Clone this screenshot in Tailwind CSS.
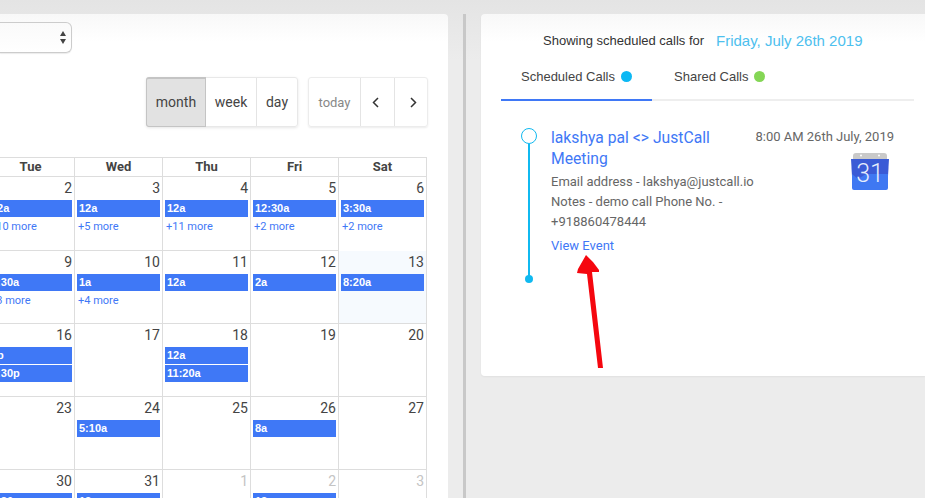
<!DOCTYPE html>
<html lang="en">
    <head>
        <title>Scheduled Calls</title>
        <meta charset="utf-8">
        <script src="https://cdn.jsdelivr.net/npm/@tailwindcss/browser@4"></script>
    </head>
    <body class="relative w-[925px] h-[498px] overflow-hidden bg-[linear-gradient(#e4e4e4,#ececec_60px)] font-['Roboto',sans-serif] text-[#444]">
        <div class="flex items-start pt-[14px]">

            <!-- calendar card -->
            <div class="w-[448px] h-[484px] shrink-0 overflow-hidden rounded-tr-[4px] bg-[linear-gradient(#f8f8f8,#fff_28px)]">
                <div class="h-[8px]"></div>
                <div class="w-[72px] h-[31px] flex items-center justify-end pr-[5px] bg-[linear-gradient(#fafafa,#fff)] border border-l-0 border-[#ccc] rounded-r-[6px] shadow-[0_1px_1px_rgba(0,0,0,0.08)]">
                    <svg width="6" height="13" viewBox="0 0 6 13" class="fill-[#444]"><path d="M3 0 6 5H0Z"/><path d="M0 8H6L3 13Z"/></svg>
                </div>

                <div class="flex justify-end gap-[10px] mt-[24px] pr-[20px] text-[14px] leading-[49px]">
                    <div class="flex h-[50px] rounded-[3px] border border-[#e8e8e8] shadow-[0_1px_3px_rgba(0,0,0,0.1)]">
                        <div class="w-[60px] text-center bg-[#e2e2e2] border-[#c4c4c4] border border-t-[2px] -m-px mr-0 rounded-l-[3px] leading-[47px]">month</div>
                        <div class="w-[51px] text-center border-r border-[#e4e4e4]">week</div>
                        <div class="w-[40px] text-center">day</div>
                    </div>
                    <div class="flex h-[50px] rounded-[3px] border border-[#ececec] shadow-[0_1px_2px_rgba(0,0,0,0.08)]">
                        <div class="w-[52px] text-center text-[13px] text-[#888] border-r border-[#e4e4e4]">today</div>
                        <div class="w-[34px] flex items-center justify-center pr-[5px] border-r border-[#e4e4e4]">
                            <svg width="7" height="11" viewBox="0 0 7 11" fill="none" class="stroke-[#333] stroke-[1.5]"><path d="M6 1 1.5 5.5 6 10"/></svg>
                        </div>
                        <div class="w-[32px] flex items-center justify-center pl-[4px]">
                            <svg width="7" height="11" viewBox="0 0 7 11" fill="none" class="stroke-[#333] stroke-[1.5]"><path d="M1 1 5.5 5.5 1 10"/></svg>
                        </div>
                    </div>
                </div>

                <!-- month grid -->
                <div class="grid grid-cols-[repeat(5,88px)] grid-rows-[19px_74px_73px_73px_73px_73px] w-[440px] -ml-[13px] mt-[30px] border-t border-[#ddd] text-[14px] leading-[20px]">
                    <div class="border-r border-b border-[#ddd] text-center text-[13px] font-bold leading-[18px]">Tue</div>
                    <div class="border-r border-b border-[#ddd] text-center text-[13px] font-bold leading-[18px]">Wed</div>
                    <div class="border-r border-b border-[#ddd] text-center text-[13px] font-bold leading-[18px]">Thu</div>
                    <div class="border-r border-b border-[#ddd] text-center text-[13px] font-bold leading-[18px]">Fri</div>
                    <div class="border-r border-b border-[#ddd] text-center text-[13px] font-bold leading-[18px]">Sat</div>

                    <div class="border-r border-b border-[#ddd]">
                        <div class="h-[23px] pt-px pr-[2px] text-right">2</div>
                        <div class="h-[17px] mx-[2px] pl-[2px] bg-[#3f78f6] text-white text-[11px] font-bold font-['Liberation_Sans',sans-serif] leading-[17px]">12a</div>
                        <div class="h-[20px] pl-[3px] text-[#3f78f6] text-[11px] leading-[20px]">+10 more</div>
                    </div>
                    <div class="border-r border-b border-[#ddd]">
                        <div class="h-[23px] pt-px pr-[2px] text-right">3</div>
                        <div class="h-[17px] mx-[2px] pl-[2px] bg-[#3f78f6] text-white text-[11px] font-bold font-['Liberation_Sans',sans-serif] leading-[17px]">12a</div>
                        <div class="h-[20px] pl-[3px] text-[#3f78f6] text-[11px] leading-[20px]">+5 more</div>
                    </div>
                    <div class="border-r border-b border-[#ddd]">
                        <div class="h-[23px] pt-px pr-[2px] text-right">4</div>
                        <div class="h-[17px] mx-[2px] pl-[2px] bg-[#3f78f6] text-white text-[11px] font-bold font-['Liberation_Sans',sans-serif] leading-[17px]">12a</div>
                        <div class="h-[20px] pl-[3px] text-[#3f78f6] text-[11px] leading-[20px]">+11 more</div>
                    </div>
                    <div class="border-r border-b border-[#ddd]">
                        <div class="h-[23px] pt-px pr-[2px] text-right">5</div>
                        <div class="h-[17px] mx-[2px] pl-[2px] bg-[#3f78f6] text-white text-[11px] font-bold font-['Liberation_Sans',sans-serif] leading-[17px]">12:30a</div>
                        <div class="h-[20px] pl-[3px] text-[#3f78f6] text-[11px] leading-[20px]">+2 more</div>
                    </div>
                    <div class="border-r border-[#ddd]">
                        <div class="h-[23px] pt-px pr-[2px] text-right">6</div>
                        <div class="h-[17px] mx-[2px] pl-[2px] bg-[#3f78f6] text-white text-[11px] font-bold font-['Liberation_Sans',sans-serif] leading-[17px]">3:30a</div>
                        <div class="h-[20px] pl-[3px] text-[#3f78f6] text-[11px] leading-[20px]">+2 more</div>
                    </div>

                    <div class="border-r border-b border-[#ddd]">
                        <div class="h-[23px] pt-px pr-[2px] text-right">9</div>
                        <div class="h-[17px] mx-[2px] pl-[2px] bg-[#3f78f6] text-white text-[11px] font-bold font-['Liberation_Sans',sans-serif] leading-[17px]">2:30a</div>
                        <div class="h-[20px] pl-[3px] text-[#3f78f6] text-[11px] leading-[20px]">+3 more</div>
                    </div>
                    <div class="border-r border-b border-[#ddd]">
                        <div class="h-[23px] pt-px pr-[2px] text-right">10</div>
                        <div class="h-[17px] mx-[2px] pl-[2px] bg-[#3f78f6] text-white text-[11px] font-bold font-['Liberation_Sans',sans-serif] leading-[17px]">1a</div>
                        <div class="h-[20px] pl-[3px] text-[#3f78f6] text-[11px] leading-[20px]">+4 more</div>
                    </div>
                    <div class="border-r border-b border-[#ddd]">
                        <div class="h-[23px] pt-px pr-[2px] text-right">11</div>
                        <div class="h-[17px] mx-[2px] pl-[2px] bg-[#3f78f6] text-white text-[11px] font-bold font-['Liberation_Sans',sans-serif] leading-[17px]">12a</div>
                    </div>
                    <div class="border-r border-b border-[#ddd]">
                        <div class="h-[23px] pt-px pr-[2px] text-right">12</div>
                        <div class="h-[17px] mx-[2px] pl-[2px] bg-[#3f78f6] text-white text-[11px] font-bold font-['Liberation_Sans',sans-serif] leading-[17px]">2a</div>
                    </div>
                    <div class="border-r border-b border-[#ddd] bg-[#f6fafe]">
                        <div class="h-[23px] pt-px pr-[2px] text-right">13</div>
                        <div class="h-[17px] mx-[2px] pl-[2px] bg-[#3f78f6] text-white text-[11px] font-bold font-['Liberation_Sans',sans-serif] leading-[17px]">8:20a</div>
                    </div>

                    <div class="border-r border-b border-[#ddd]">
                        <div class="h-[23px] pt-px pr-[2px] text-right">16</div>
                        <div class="h-[17px] mx-[2px] mb-px pl-[2px] bg-[#3f78f6] text-white text-[11px] font-bold font-['Liberation_Sans',sans-serif] leading-[17px]">1p</div>
                        <div class="h-[17px] mx-[2px] pl-[2px] bg-[#3f78f6] text-white text-[11px] font-bold font-['Liberation_Sans',sans-serif] leading-[17px]">2:30p</div>
                    </div>
                    <div class="border-r border-b border-[#ddd]">
                        <div class="h-[23px] pt-px pr-[2px] text-right">17</div>
                    </div>
                    <div class="border-r border-b border-[#ddd]">
                        <div class="h-[23px] pt-px pr-[2px] text-right">18</div>
                        <div class="h-[17px] mx-[2px] mb-px pl-[2px] bg-[#3f78f6] text-white text-[11px] font-bold font-['Liberation_Sans',sans-serif] leading-[17px]">12a</div>
                        <div class="h-[17px] mx-[2px] pl-[2px] bg-[#3f78f6] text-white text-[11px] font-bold font-['Liberation_Sans',sans-serif] leading-[17px]">11:20a</div>
                    </div>
                    <div class="border-r border-b border-[#ddd]">
                        <div class="h-[23px] pt-px pr-[2px] text-right">19</div>
                    </div>
                    <div class="border-r border-b border-[#ddd]">
                        <div class="h-[23px] pt-px pr-[2px] text-right">20</div>
                    </div>

                    <div class="border-r border-b border-[#ddd]">
                        <div class="h-[23px] pt-px pr-[2px] text-right">23</div>
                    </div>
                    <div class="border-r border-b border-[#ddd]">
                        <div class="h-[23px] pt-px pr-[2px] text-right">24</div>
                        <div class="h-[17px] mx-[2px] pl-[2px] bg-[#3f78f6] text-white text-[11px] font-bold font-['Liberation_Sans',sans-serif] leading-[17px]">5:10a</div>
                    </div>
                    <div class="border-r border-b border-[#ddd]">
                        <div class="h-[23px] pt-px pr-[2px] text-right">25</div>
                    </div>
                    <div class="border-r border-b border-[#ddd]">
                        <div class="h-[23px] pt-px pr-[2px] text-right">26</div>
                        <div class="h-[17px] mx-[2px] pl-[2px] bg-[#3f78f6] text-white text-[11px] font-bold font-['Liberation_Sans',sans-serif] leading-[17px]">8a</div>
                    </div>
                    <div class="border-r border-b border-[#ddd]">
                        <div class="h-[23px] pt-px pr-[2px] text-right">27</div>
                    </div>

                    <div class="border-r border-[#ddd]">
                        <div class="h-[23px] pt-px pr-[2px] text-right">30</div>
                        <div class="h-[17px] mx-[2px] pl-[2px] bg-[#3f78f6] text-white text-[11px] font-bold font-['Liberation_Sans',sans-serif] leading-[17px]">1:30a</div>
                    </div>
                    <div class="border-r border-[#ddd]">
                        <div class="h-[23px] pt-px pr-[2px] text-right">31</div>
                        <div class="h-[17px] mx-[2px] pl-[2px] bg-[#3f78f6] text-white text-[11px] font-bold font-['Liberation_Sans',sans-serif] leading-[17px]">12a</div>
                    </div>
                    <div class="border-r border-[#ddd]">
                        <div class="h-[23px] pt-px pr-[2px] text-right text-[#c4c4c4]">1</div>
                    </div>
                    <div class="border-r border-[#ddd]">
                        <div class="h-[23px] pt-px pr-[2px] text-right text-[#c4c4c4]">2</div>
                        <div class="h-[17px] mx-[2px] pl-[2px] bg-[#3f78f6] text-white text-[11px] font-bold font-['Liberation_Sans',sans-serif] leading-[17px]">12a</div>
                    </div>
                    <div class="border-r border-[#ddd]">
                        <div class="h-[23px] pt-px pr-[2px] text-right text-[#c4c4c4]">3</div>
                    </div>
                </div>
            </div>

            <!-- divider -->
            <div class="w-[3px] h-[484px] ml-[15px] mr-[15px] shrink-0 bg-[#c8c8c8]"></div>

            <!-- scheduled calls card -->
            <div class="w-[444px] h-[362px] shrink-0 rounded-l-[4px] bg-[linear-gradient(#f8f8f8,#fff_28px)] shadow-[0_1px_2px_rgba(0,0,0,0.05)]">
                <div class="flex items-center h-[26px] mt-[14px] pl-[62px] text-[#333]">
                    <span class="w-[173px] shrink-0 text-[13px] font-['Liberation_Sans',sans-serif]">Showing scheduled calls for</span>
                    <span class="text-[15px] text-[#4dc0ee] font-['Liberation_Sans',sans-serif]">Friday, July 26th 2019</span>
                </div>

                <div class="flex w-[413px] h-[47px] ml-[20px] border-b-[2px] border-[#eee] text-[13px] text-[#444] font-['Liberation_Sans',sans-serif]">
                    <div class="flex items-center gap-[6px] w-[151px] h-[47px] pl-[20px] border-b-[2px] border-[#3f78f6]">
                        <span>Scheduled Calls</span>
                        <span class="w-[11px] h-[11px] rounded-full bg-[#0cb8f4]"></span>
                    </div>
                    <div class="flex items-center gap-[6px] h-[47px] pl-[22px] pb-[2px]">
                        <span>Shared Calls</span>
                        <span class="w-[11px] h-[11px] rounded-full bg-[#84d655]"></span>
                    </div>
                </div>

                <div class="flex mt-[26px] ml-[40px]">
                    <!-- timeline -->
                    <div class="flex flex-col items-center w-[16px] shrink-0 mt-[1px]">
                        <div class="w-[16px] h-[16px] rounded-full border border-[#10b9f0] bg-white"></div>
                        <div class="w-[2px] h-[134px] -mb-[3px] bg-[#10b9f0]"></div>
                        <div class="w-[8px] h-[8px] rounded-full bg-[#10b9f0]"></div>
                    </div>
                    <div class="w-[205px] ml-[14px] shrink-0">
                        <div class="text-[15.7px] leading-[21px] text-[#3f78f6]">lakshya pal &lt;&gt; JustCall Meeting</div>
                        <div class="mt-[3px] text-[13px] leading-[20px] text-[#666] whitespace-nowrap">Email address - lakshya@justcall.io<br>Notes - demo call Phone No. -<br>+918860478444</div>
                        <div class="mt-[5px] text-[13px] leading-[18px] text-[#3f78f6]">View Event</div>
                    </div>
                    <div class="flex flex-col items-end w-[138px] shrink-0">
                        <div class="text-[13px] leading-[20px] text-[#666] whitespace-nowrap">8:00 AM 26th July, 2019</div>
                        <svg width="38" height="38" viewBox="0 0 38 38" class="mt-[5px] mr-[5px]">
                            <path d="M2 4Q2 1 5 1H33Q36 1 36 4V8H2Z" fill="#c9c9c9"/>
                            <circle cx="10" cy="3.5" r="1" fill="#fff"/>
                            <circle cx="28" cy="3.5" r="1" fill="#fff"/>
                            <path d="M0 7H38L37 24H1Z" fill="#3a5bd6"/>
                            <path d="M1 22H37L37 36Q37 38 35 38H3Q1 38 1 36Z" fill="#3f78f2"/>
                            <path d="M1 22H15L7 27Z" fill="#3a5bd6"/>
                            <text x="19" y="30" text-anchor="middle" font-size="25" font-weight="300" font-family="Roboto, sans-serif" fill="#e6edfc">31</text>
                        </svg>
                    </div>
                </div>
            </div>
        </div>

        <!-- hand drawn arrow over the screenshot -->
        <svg width="40" height="120" viewBox="0 0 40 120" class="absolute left-[570px] top-[252px]" fill="#f5070f">
            <path d="M16 3 23 10 29 18 29 20 22 20 33 116 28 116 17 22 7 21 8 17Z"/>
        </svg>
    </body>
</html>
